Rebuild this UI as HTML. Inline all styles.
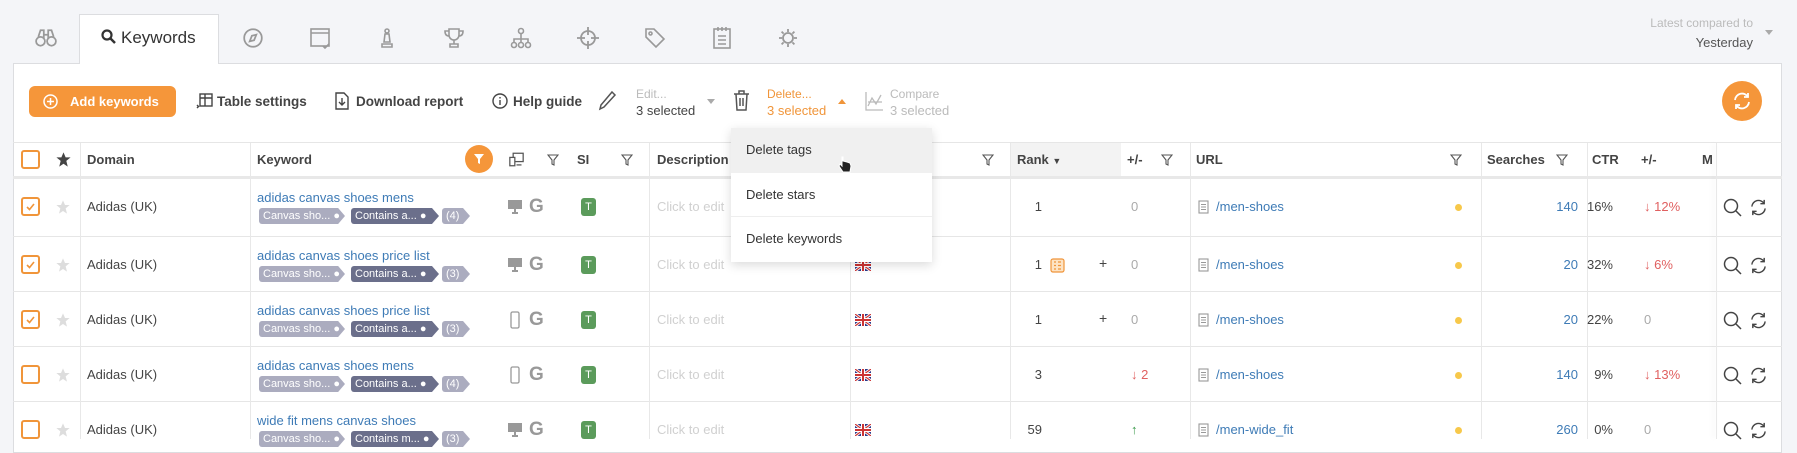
<!DOCTYPE html>
<html><head><meta charset="utf-8">
<style>
*{box-sizing:border-box;margin:0;padding:0}
body{width:1797px;height:439px;overflow:hidden;background:#f4f5f8;font-family:"Liberation Sans",sans-serif;font-size:13px;color:#333;position:relative}
.a{position:absolute;white-space:nowrap}
.panel{position:absolute;left:13px;top:63px;width:1769px;height:390px;background:#fff;border:1px solid #dcdde0}
.tab{position:absolute;left:79px;top:14px;width:140px;height:50px;background:#fff;border:1px solid #dcdde0;border-bottom:none;z-index:2}
.hl{position:absolute;left:13px;width:1769px;height:1px;background:#e6e6e6}
.vl{position:absolute;top:143px;width:1px;height:296px;background:#e8e8e8}
.cb{position:absolute;left:21px;width:19px;height:19px;border:2px solid #f0953a;border-radius:3px;background:#fff}
.tag{position:absolute;height:16px;line-height:16px;font-size:11px;color:#fff;padding-left:4px}
.kw{color:#3e7bb6}
.g{color:#aaa}
.tb{font-size:13.5px;font-weight:bold;color:#444}
</style></head><body>
<div class="tab"></div>
<div class="panel"></div>
<div class="a" style="left:101px;top:28px;z-index:3;font-size:17px;color:#333">
<svg width="15" height="15" viewBox="0 0 15 15" style="vertical-align:-1px;margin-right:5px"><circle cx="6" cy="6" r="4.5" fill="none" stroke="#333" stroke-width="2.2"/><path d="M9.5 9.5L14 14" stroke="#333" stroke-width="2.5"/></svg>Keywords</div>
<svg class="a" style="left:35px;top:27px" width="22" height="22" viewBox="0 0 20 20" fill="none" stroke="#999" stroke-width="1.6"><circle cx="5" cy="13" r="4"/><circle cx="15" cy="13" r="4"/><path d="M3 9L5 3h3v8M17 9l-2-6h-3v8M8 7h4"/></svg>
<svg class="a" style="left:242px;top:27px" width="22" height="22" viewBox="0 0 20 20" fill="none" stroke="#999" stroke-width="1.6"><circle cx="10" cy="10" r="8"/><path d="M13 7l-2 5-4 1 2-5z"/></svg>
<svg class="a" style="left:309px;top:26px" width="24" height="24" viewBox="0 0 24 24" fill="none" stroke="#999" stroke-width="1.6"><rect x="2" y="3" width="18" height="17"/><path d="M2 7h18M14 20l2 2 4-4"/></svg>
<svg class="a" style="left:378px;top:27px" width="18" height="22" viewBox="0 0 18 22" fill="none" stroke="#999" stroke-width="1.6"><circle cx="9" cy="4" r="2"/><path d="M7 7h4l1 8H6zM4 20h10v-3H4z"/></svg>
<svg class="a" style="left:443px;top:27px" width="22" height="22" viewBox="0 0 22 22" fill="none" stroke="#999" stroke-width="1.6"><path d="M6 2h10v6a5 5 0 01-10 0zM6 4H2c0 4 2 5 4 5M16 4h4c0 4-2 5-4 5M11 13v4M7 20h8v-3H7z"/></svg>
<svg class="a" style="left:510px;top:27px" width="22" height="22" viewBox="0 0 22 22" fill="none" stroke="#999" stroke-width="1.6"><circle cx="11" cy="4" r="2.5"/><circle cx="4" cy="18" r="2.5"/><circle cx="11" cy="18" r="2.5"/><circle cx="18" cy="18" r="2.5"/><path d="M11 7v8M4 15v-3h14v3"/></svg>
<svg class="a" style="left:576px;top:26px" width="24" height="24" viewBox="0 0 24 24" fill="none" stroke="#999" stroke-width="1.8"><circle cx="12" cy="12" r="7"/><path d="M12 1v8M12 15v8M1 12h8M15 12h8"/></svg>
<svg class="a" style="left:643px;top:26px" width="24" height="24" viewBox="0 0 24 24" fill="none" stroke="#999" stroke-width="1.6"><path d="M3 3h8l10 10-8 8L3 11z"/><circle cx="7.5" cy="7.5" r="1.5"/></svg>
<svg class="a" style="left:712px;top:26px" width="20" height="24" viewBox="0 0 20 24" fill="none" stroke="#999" stroke-width="1.6"><rect x="2" y="3" width="16" height="19"/><path d="M6 1v4M10 1v4M14 1v4M6 10h8M6 14h8M6 18h8"/></svg>
<svg class="a" style="left:777px;top:27px" width="22" height="22" viewBox="0 0 22 22" fill="none" stroke="#999" stroke-width="1.8"><path d="M11 2v3M11 17v3M2 11h3M17 11h3M4.6 4.6l2 2M15.4 15.4l2 2M4.6 17.4l2-2M15.4 6.6l2-2"/><circle cx="11" cy="11" r="5"/></svg>
<div class="a" style="right:44px;top:16px;font-size:12px;color:#bbb;text-align:right">Latest compared to</div>
<div class="a" style="right:44px;top:35px;font-size:13px;color:#555">Yesterday</div>
<div class="a" style="left:1765px;top:30px;width:0;height:0;border:4px solid transparent;border-top:5px solid #aaa"></div>

<div class="a" style="left:29px;top:86px;width:147px;height:31px;background:#f5963a;border-radius:6px;color:#fff;font-size:13px;font-weight:bold;line-height:31px;padding-left:14px">
<svg width="15" height="15" viewBox="0 0 15 15" style="vertical-align:-3px;margin-right:12px" fill="none" stroke="#fff" stroke-width="1.5"><circle cx="7.5" cy="7.5" r="6.5"/><path d="M7.5 4v7M4 7.5h7"/></svg>Add keywords</div>
<svg class="a" style="left:196px;top:92px" width="18" height="18" viewBox="0 0 18 18" fill="none" stroke="#444" stroke-width="1.4"><rect x="4" y="2" width="12" height="12"/><path d="M4 6h12M9 2v12M1 13l2 2M1 16l2-2"/></svg>
<div class="a tb" style="left:217px;top:94px">Table settings</div>
<svg class="a" style="left:334px;top:92px" width="16" height="18" viewBox="0 0 16 18" fill="none" stroke="#444" stroke-width="1.4"><path d="M2 1h8l4 4v12H2z"/><path d="M8 6v7M5 10l3 3 3-3"/></svg>
<div class="a tb" style="left:356px;top:94px">Download report</div>
<svg class="a" style="left:492px;top:93px" width="16" height="16" viewBox="0 0 16 16" fill="none" stroke="#444" stroke-width="1.4"><circle cx="8" cy="8" r="7"/><path d="M8 7v5M8 4v1.5"/></svg>
<div class="a tb" style="left:513px;top:94px">Help guide</div>
<svg class="a" style="left:597px;top:90px" width="20" height="22" viewBox="0 0 20 22" fill="none" stroke="#555" stroke-width="1.5"><path d="M15 2l3 3L7 17l-4 2 1-4z"/></svg>
<div class="a" style="left:636px;top:87px;font-size:12px;color:#bbb">Edit...</div>
<div class="a" style="left:636px;top:103px;font-size:13px;color:#444">3 selected</div>
<div class="a" style="left:707px;top:99px;border:4px solid transparent;border-top:5px solid #aaa"></div>
<svg class="a" style="left:733px;top:90px" width="17" height="21" viewBox="0 0 17 21" fill="none" stroke="#555" stroke-width="1.5"><path d="M1 4h15M6 4V1h5v3M3 4l1 16h9l1-16M7 8v8M10 8v8"/></svg>
<div class="a" style="left:767px;top:87px;font-size:12px;color:#f0953a">Delete...</div>
<div class="a" style="left:767px;top:103px;font-size:13px;color:#f0953a">3 selected</div>
<div class="a" style="left:838px;top:95px;border:4px solid transparent;border-bottom:5px solid #f0953a"></div>
<svg class="a" style="left:864px;top:91px" width="20" height="20" viewBox="0 0 20 20" fill="none" stroke="#bbb" stroke-width="1.3"><path d="M2 1v18h17M4 15l4-8 4 6 5-9M4 11h14"/></svg>
<div class="a" style="left:890px;top:87px;font-size:12px;color:#bbb">Compare</div>
<div class="a" style="left:890px;top:103px;font-size:13px;color:#bbb">3 selected</div>
<div class="a" style="left:1722px;top:81px;width:40px;height:40px;border-radius:50%;background:#f5963a"></div>
<svg class="a" style="left:1732px;top:91px" width="20" height="20" viewBox="0 0 20 20" fill="none" stroke="#fff" stroke-width="1.8"><path d="M3 9a7 7 0 0113-3M17 11a7 7 0 01-13 3"/><path d="M16 2v4h-4M4 18v-4h4"/></svg>

<div class="hl" style="top:142px"></div>
<div class="hl" style="top:176px;height:3px;background:#e8e8e8"></div>
<div class="a" style="left:1010px;top:143px;width:111px;height:33px;background:#f3f3f3"></div>
<div class="hl" style="top:236px"></div>
<div class="hl" style="top:291px"></div>
<div class="hl" style="top:346px"></div>
<div class="hl" style="top:401px"></div>
<div class="vl" style="left:80px"></div><div class="vl" style="left:250px"></div><div class="vl" style="left:649px"></div><div class="vl" style="left:850px"></div><div class="vl" style="left:1010px"></div><div class="vl" style="left:1190px"></div><div class="vl" style="left:1481px"></div><div class="vl" style="left:1587px"></div><div class="vl" style="left:1716px;box-shadow:-3px 0 5px rgba(0,0,0,.08)"></div>

<div class="cb" style="top:150px"></div>
<svg class="a" style="left:55px;top:151px" width="17" height="17" viewBox="0 0 24 24"><path d="M12 2l3 7h7l-6 5 2 8-6-4-6 4 2-8-6-5h7z" fill="#444"/></svg>
<div class="a" style="left:87px;top:152px;font-weight:bold;color:#444">Domain</div>
<div class="a" style="left:257px;top:152px;font-weight:bold;color:#444">Keyword</div>
<div class="a" style="left:465px;top:145px;width:28px;height:28px;border-radius:50%;background:#f5963a"></div>
<svg class="a" style="left:473px;top:153px" width="12" height="12" viewBox="0 0 12 12"><path d="M1 1h10L7 6v5L5 10V6z" fill="#fff"/></svg>
<svg class="a" style="left:509px;top:152px" width="15" height="15" viewBox="0 0 18 17" fill="none" stroke="#555" stroke-width="1.5"><rect x="5" y="1" width="12" height="10"/><rect x="1" y="6" width="6" height="10" fill="#fff"/><path d="M9 15h6"/></svg>
<div class="a" style="left:577px;top:152px;font-weight:bold;color:#444">SI</div>
<div class="a" style="left:657px;top:152px;font-weight:bold;color:#444">Description</div>
<div class="a" style="left:1017px;top:152px;font-weight:bold;color:#444">Rank <span style="font-size:9px">&#9660;</span></div>
<div class="a" style="left:1127px;top:152px;font-weight:bold;color:#444">+/-</div>
<div class="a" style="left:1196px;top:152px;font-weight:bold;color:#444">URL</div>
<div class="a" style="left:1487px;top:152px;font-weight:bold;color:#444">Searches</div>
<div class="a" style="left:1592px;top:152px;font-weight:bold;color:#444">CTR</div>
<div class="a" style="left:1641px;top:152px;font-weight:bold;color:#444">+/-</div>
<div class="a" style="left:1702px;top:152px;font-weight:bold;color:#444;width:12px;overflow:hidden">M</div>
<svg class="a" style="left:547px;top:154px" width="12" height="12" viewBox="0 0 12 12"><path d="M1 1h10L7 6v5L5 10V6z" fill="none" stroke="#555" stroke-width="1.1"/></svg>
<svg class="a" style="left:621px;top:154px" width="12" height="12" viewBox="0 0 12 12"><path d="M1 1h10L7 6v5L5 10V6z" fill="none" stroke="#555" stroke-width="1.1"/></svg>
<svg class="a" style="left:982px;top:154px" width="12" height="12" viewBox="0 0 12 12"><path d="M1 1h10L7 6v5L5 10V6z" fill="none" stroke="#555" stroke-width="1.1"/></svg>
<svg class="a" style="left:1161px;top:154px" width="12" height="12" viewBox="0 0 12 12"><path d="M1 1h10L7 6v5L5 10V6z" fill="none" stroke="#555" stroke-width="1.1"/></svg>
<svg class="a" style="left:1450px;top:154px" width="12" height="12" viewBox="0 0 12 12"><path d="M1 1h10L7 6v5L5 10V6z" fill="none" stroke="#555" stroke-width="1.1"/></svg>
<svg class="a" style="left:1556px;top:154px" width="12" height="12" viewBox="0 0 12 12"><path d="M1 1h10L7 6v5L5 10V6z" fill="none" stroke="#555" stroke-width="1.1"/></svg>

<div id="rows"></div>
<script>
var rows=[
{t:178,ck:1,kw:"adidas canvas shoes mens",n:"(4)",dev:"d",rk:"1",rs:0,pm:"",dv:'<span class="g">0</span>',url:"/men-shoes",s:"140",c:"16%",cd:'<span style="color:#e06060">&#8595; 12%</span>',flag:0},
{t:236,ck:1,kw:"adidas canvas shoes price list",n:"(3)",dev:"d",rk:"1",rs:1,pm:"+",dv:'<span class="g">0</span>',url:"/men-shoes",s:"20",c:"32%",cd:'<span style="color:#e06060">&#8595; 6%</span>',flag:1},
{t:291,ck:1,kw:"adidas canvas shoes price list",n:"(3)",dev:"m",rk:"1",rs:0,pm:"+",dv:'<span class="g">0</span>',url:"/men-shoes",s:"20",c:"22%",cd:'<span class="g">0</span>',flag:1},
{t:346,ck:0,kw:"adidas canvas shoes mens",n:"(4)",dev:"m",rk:"3",rs:0,pm:"",dv:'<span style="color:#e06060">&#8595; 2</span>',url:"/men-shoes",s:"140",c:"9%",cd:'<span style="color:#e06060">&#8595; 13%</span>',flag:1},
{t:401,ck:0,kw:"wide fit mens canvas shoes",n:"(3)",dev:"d",rk:"59",rs:0,pm:"",dv:'<span style="color:#3a9a4a">&#8593;</span>',url:"/men-wide_fit",s:"260",c:"0%",cd:'<span class="g">0</span>',flag:1,t2:"Contains m..."}
];
var h="";
rows.forEach(function(r){
 var c=r.t+29;
 h+='<div class="cb" style="top:'+(c-10)+'px">'+(r.ck?'<svg width="15" height="15" viewBox="0 0 15 15" style="position:absolute;left:0;top:0"><path d="M4 8l2.5 2.5L11 5" fill="none" stroke="#f0953a" stroke-width="1.6"/></svg>':'')+'</div>';
 h+='<svg class="a" style="left:55px;top:'+(c-8)+'px" width="16" height="16" viewBox="0 0 24 24"><path d="M12 2l3 7h7l-6 5 2 8-6-4-6 4 2-8-6-5h7z" fill="#ddd"/></svg>';
 h+='<div class="a" style="left:87px;top:'+(c-8)+'px;color:#444">Adidas (UK)</div>';
 h+='<div class="a kw" style="left:257px;top:'+(r.t+12)+'px">'+r.kw+'</div>';
 var ty=r.t+30;
 h+='<div class="tag" style="left:259px;top:'+ty+'px;width:86px;background:#abacbf;clip-path:polygon(0 0,92% 0,100% 50%,92% 100%,0 100%);border-radius:3px 0 0 3px">Canvas sho... &#9679;</div>';
 h+='<div class="tag" style="left:351px;top:'+ty+'px;width:88px;background:#6b6f8b;clip-path:polygon(0 0,92% 0,100% 50%,92% 100%,0 100%);border-radius:3px 0 0 3px">'+(r.t2||"Contains a...")+' &#9679;</div>';
 h+='<div class="tag" style="left:442px;top:'+ty+'px;width:28px;background:#abacbf;clip-path:polygon(0 0,75% 0,100% 50%,75% 100%,0 100%);border-radius:3px 0 0 3px">'+r.n+'</div>';
 if(r.dev=="d") h+='<svg class="a" style="left:507px;top:'+(c-8)+'px" width="16" height="15" viewBox="0 0 16 15"><rect x="1" y="1" width="14" height="9" fill="#999"/><path d="M5 14h6M8 10v4" stroke="#999" stroke-width="2"/></svg>';
 else h+='<svg class="a" style="left:510px;top:'+(c-9)+'px" width="10" height="18" viewBox="0 0 10 18"><rect x="1" y="1" width="8" height="16" rx="1.5" fill="none" stroke="#999" stroke-width="1.3"/></svg>';
 h+='<div class="a" style="left:529px;top:'+(c-11)+'px;font-size:19px;font-weight:bold;color:#999">G</div>';
 h+='<div class="a" style="left:581px;top:'+(c-9)+'px;width:15px;height:18px;background:#5b9b5b;border-radius:3px;color:#fff;font-size:11px;text-align:center;line-height:18px">T</div>';
 h+='<div class="a" style="left:657px;top:'+(c-8)+'px;color:#d0d0d0">Click to edit</div>';
 if(r.flag) h+='<svg class="a" style="left:855px;top:'+(c-6)+'px" width="16" height="12" viewBox="0 0 16 12"><rect width="16" height="12" fill="#2b3a8a"/><path d="M0 0L16 12M16 0L0 12" stroke="#fff" stroke-width="3"/><path d="M0 0L16 12M16 0L0 12" stroke="#c33" stroke-width="1.2"/><path d="M8 0v12M0 6h16" stroke="#fff" stroke-width="4"/><path d="M8 0v12M0 6h16" stroke="#c33" stroke-width="2"/></svg>';
 h+='<div class="a" style="left:1020px;width:22px;text-align:right;top:'+(c-8)+'px;color:#444">'+r.rk+'</div>';
 if(r.rs) h+='<svg class="a" style="left:1050px;top:'+(c-7)+'px" width="15" height="15" viewBox="0 0 15 15"><rect x="1" y="1" width="13" height="13" rx="2" fill="#fde3c4" stroke="#f0953a" stroke-width="1.2"/><path d="M4 4h2M8 4h3M4 7.5h2M8 7.5h3M4 11h2M8 11h3" stroke="#f0953a" stroke-width="1.2"/></svg>';
 if(r.pm) h+='<div class="a" style="left:1099px;top:'+(c-10)+'px;color:#444;font-size:14px">+</div>';
 h+='<div class="a" style="left:1131px;top:'+(c-8)+'px">'+r.dv+'</div>';
 h+='<svg class="a" style="left:1198px;top:'+(c-7)+'px" width="11" height="14" viewBox="0 0 11 14"><rect x="1" y="1" width="9" height="12" fill="none" stroke="#999" stroke-width="1.1"/><path d="M3 4.5h5M3 7h5M3 9.5h5" stroke="#999"/></svg>';
 h+='<div class="a kw" style="left:1216px;top:'+(c-8)+'px">'+r.url+'</div>';
 h+='<div class="a" style="left:1455px;top:'+(c-3)+'px;width:7px;height:7px;border-radius:50%;background:#f7c84a"></div>';
 h+='<div class="a kw" style="left:1530px;width:48px;text-align:right;top:'+(c-8)+'px">'+r.s+'</div>';
 h+='<div class="a" style="left:1580px;width:33px;text-align:right;top:'+(c-8)+'px;color:#444">'+r.c+'</div>';
 h+='<div class="a" style="left:1644px;top:'+(c-8)+'px">'+r.cd+'</div>';
 h+='<svg class="a" style="left:1723px;top:'+(c-9)+'px" width="20" height="20" viewBox="0 0 20 20" fill="none" stroke="#444" stroke-width="1.5"><circle cx="8" cy="8" r="6.5"/><path d="M13 13l5 5"/></svg>';
 h+='<svg class="a" style="left:1749px;top:'+(c-9)+'px" width="19" height="19" viewBox="0 0 20 20" fill="none" stroke="#444" stroke-width="1.5"><path d="M3 9a7 7 0 0113-3M17 11a7 7 0 01-13 3"/><path d="M16 2v4h-4M4 18v-4h4"/></svg>';
});
document.getElementById("rows").innerHTML=h;
</script>

<div class="a" style="left:731px;top:128px;width:201px;height:134px;background:#fff;box-shadow:0 3px 10px rgba(0,0,0,.15);z-index:5">
<div style="height:45px;background:#f0f0f0;padding:14px 0 0 15px;font-size:13px;color:#333">Delete tags</div>
<div style="height:44px;padding:14px 0 0 15px;font-size:13px;color:#333;border-bottom:1px solid #eee">Delete stars</div>
<div style="height:45px;padding:14px 0 0 15px;font-size:13px;color:#333">Delete keywords</div>
<svg style="position:absolute;left:107px;top:28px" width="14" height="18" viewBox="0 0 14 18"><path d="M4 1v9l-2-2-1 2 4 6h7l1-6-1-3-3-1V6L5 5V1z" fill="#222" stroke="#fff" stroke-width="1"/></svg>
</div>
</body></html>
